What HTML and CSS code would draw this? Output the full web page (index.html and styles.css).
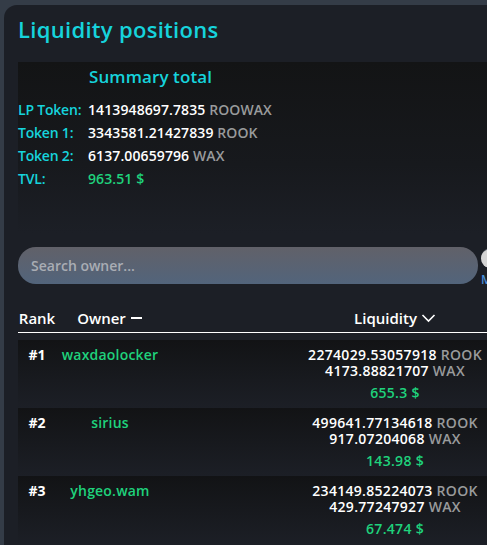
FILE: index.html
```html
<!DOCTYPE html>
<html lang="en">
<head>
<meta charset="utf-8">
<title>Liquidity positions</title>
<link rel="stylesheet" href="styles.css">
</head>
<body>
<div class="card">
  <h1 class="title">Liquidity positions</h1>
  <section class="summary">
    <h2 class="summary-title">Summary total</h2>
    <div class="sum-row"><span class="lbl">LP Token:</span><span class="val">1413948697.7835 <span class="unit">ROOWAX</span></span></div>
    <div class="sum-row"><span class="lbl">Token 1:</span><span class="val">3343581.21427839 <span class="unit">ROOK</span></span></div>
    <div class="sum-row"><span class="lbl">Token 2:</span><span class="val">6137.00659796 <span class="unit">WAX</span></span></div>
    <div class="sum-row"><span class="lbl">TVL:</span><span class="val green">963.51 $</span></div>
  </section>
  <div class="search-row">
    <input class="search" type="text" placeholder="Search owner...">
    <div class="toggle-wrap">
      <span class="toggle"><span class="knob"></span></span>
      <span class="toggle-label">My</span>
    </div>
  </div>
  <div class="table">
    <div class="thead">
      <span class="th">Rank</span>
      <span class="th">Owner <svg class="ico" width="13" height="12" viewBox="0 0 13 12"><path d="M1 6h11" stroke="#fff" stroke-width="2"/></svg></span>
      <span class="th">Liquidity <svg class="ico" width="15" height="12" viewBox="0 0 15 12"><path d="M1.5 3l6 6 6-6" fill="none" stroke="#fff" stroke-width="1.6"/></svg></span>
    </div>
    <div class="trow">
      <span class="rank">#1</span>
      <span class="owner">waxdaolocker</span>
      <span class="liq"><span>2274029.53057918 <span class="unit">ROOK</span></span><span>4173.88821707 <span class="unit">WAX</span></span><span class="usd">655.3 $</span></span>
    </div>
    <div class="trow">
      <span class="rank">#2</span>
      <span class="owner">sirius</span>
      <span class="liq"><span>499641.77134618 <span class="unit">ROOK</span></span><span>917.07204068 <span class="unit">WAX</span></span><span class="usd">143.98 $</span></span>
    </div>
    <div class="trow">
      <span class="rank">#3</span>
      <span class="owner">yhgeo.wam</span>
      <span class="liq"><span>234149.85224073 <span class="unit">ROOK</span></span><span>429.77247927 <span class="unit">WAX</span></span><span class="usd">67.474 $</span></span>
    </div>
  </div>
</div>
</body>
</html>
```
FILE: styles.css
```css
html, body {
  margin: 0;
  padding: 0;
  background: #343c47;
  overflow: hidden;
  height: 545px;
}
body {
  font-family: "Open Sans", "Noto Sans", sans-serif;
  color: #fff;
}
.card {
  margin: 5px 0 0 4px;
  width: 660px;
  height: 600px;
  background: #1c1f26;
  border-radius: 13px 0 0 0;
  padding: 11px 0 0 14px;
  box-sizing: border-box;
}
.title {
  margin: 0;
  font-size: 22px;
  line-height: 26px;
  font-weight: 600;
  color: #16d3dc;
  letter-spacing: 0.3px;
}
.summary {
  margin-top: 20px;
  width: 608px;
  height: 171px;
  box-sizing: border-box;
  padding-top: 5px;
  background: linear-gradient(#131415, #17191d 60%, #1c1f26);
}
.summary-title {
  margin: 0 0 11px 71px;
  font-size: 17px;
  line-height: 20px;
  font-weight: 600;
  color: #16d3dc;
  letter-spacing: 0.1px;
}
.sum-row {
  display: flex;
  font-size: 14px;
  line-height: 23px;
  font-weight: 600;
}
.lbl {
  width: 70px;
  color: #16d3dc;
  letter-spacing: -0.2px;
}
.val { color: #fff; letter-spacing: 0.1px; }
.unit { color: #999b9c; }
.green { color: #1fd27c; }
.search-row {
  margin-top: 14px;
  height: 37px;
  display: flex;
  gap: 3px;
  align-items: flex-start;
}
.search {
  width: 460px;
  height: 37px;
  box-sizing: border-box;
  border: none;
  border-radius: 18px;
  background: linear-gradient(#616169, #52647b);
  padding: 0 13px;
  font-family: inherit;
  font-size: 14px;
  font-weight: 600;
  color: #fff;
  outline: none;
}
.search::placeholder { color: #a9adb4; }
.toggle-wrap {
  display: flex;
  flex-direction: column;
  align-items: flex-start;
  gap: 5px;
}
.toggle {
  display: flex;
  width: 38px;
  height: 20px;
  margin-top: 1px;
  border-radius: 10px;
  background: #60656e;
}
.knob {
  width: 19px;
  height: 19px;
  border-radius: 50%;
  background: #d4d4d4;
  margin: 0.5px 0;
}
.toggle-label {
  font-size: 12px;
  font-weight: 600;
  color: #4a8fd8;
  line-height: 14px;
}
.table { margin-top: 24px; width: 608px; }
.thead {
  display: grid;
  grid-template-columns: 38px 108px 1fr;
  border-bottom: 1px solid #fff;
  padding-bottom: 4px;
  font-size: 15px;
  line-height: 20px;
  font-weight: 600;
}
.th {
  display: flex;
  justify-content: center;
  align-items: center;
  gap: 4px;
}
.ico { display: block; }
.trow {
  display: grid;
  grid-template-columns: 38px 108px 1fr;
  align-items: start;
  padding: 7px 0 6px;
  height: 68px;
  box-sizing: border-box;
  background: linear-gradient(#121315, #1c1f26);
  font-size: 14px;
  line-height: 16px;
  font-weight: 600;
}
.thead + .trow { margin-top: 7px; }
.rank { text-align: center; font-weight: 700; }
.owner { text-align: center; color: #1fd27c; letter-spacing: 0.2px; }
.liq {
  display: flex;
  flex-direction: column;
  align-items: center;
  letter-spacing: 0.3px;
}
.liq .usd { color: #1fd27c; margin-top: 6px; }
```
